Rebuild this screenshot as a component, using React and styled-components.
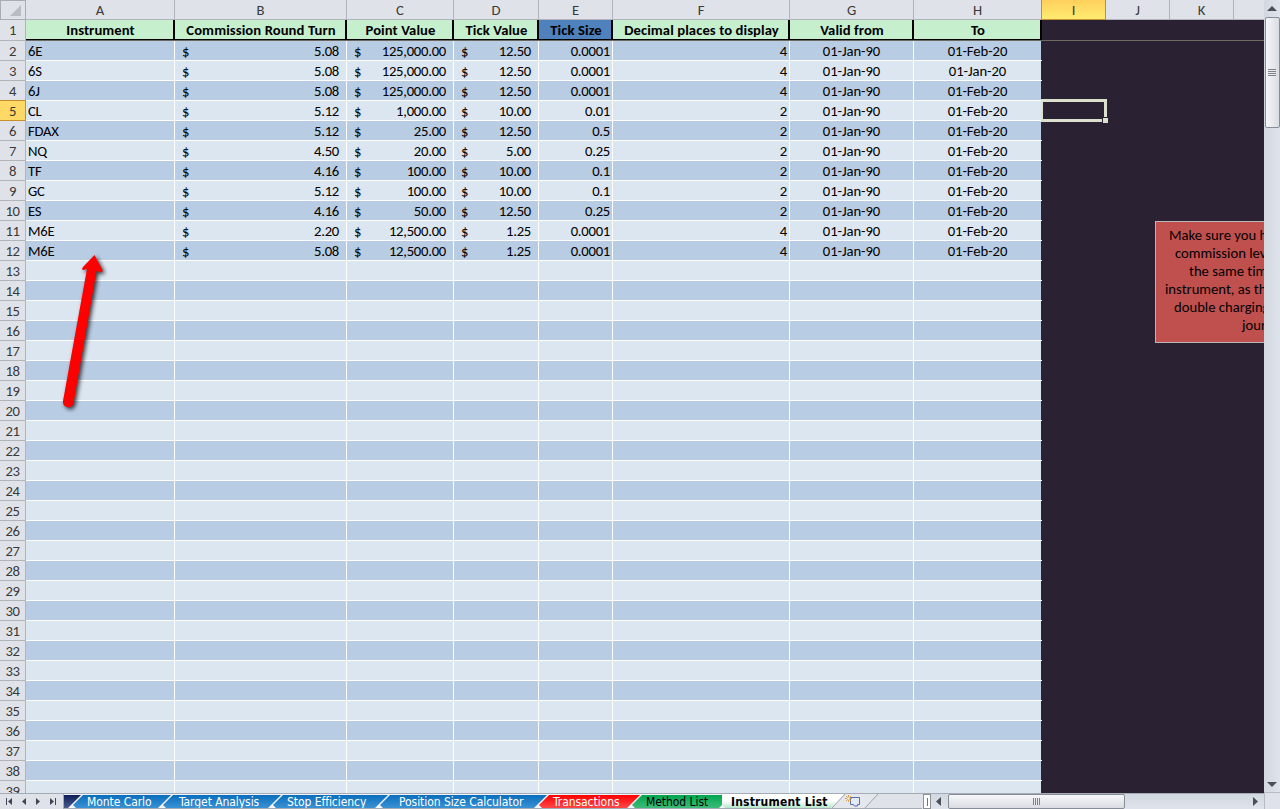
import React from "react";
import styled, { createGlobalStyle, css } from "styled-components";

const GlobalStyle = createGlobalStyle`
  *,
  *::after {
    box-sizing: border-box;
  }

  body {
    margin: 0;
    overflow: hidden;
  }
`;

const ORANGE_LINE = "#c58f2d";

const Window = styled.div`
  display: grid;
  grid-template-columns: 1264px 16px;
  grid-template-rows: 793px 16px;
  width: 1280px;
  height: 809px;
  overflow: hidden;
  background: #dfe2e8;
  color: #000;
  font-family: Carlito, Lato, sans-serif;
  font-size: 14.67px;
  font-variant-ligatures: none;
`;

const Sheet = styled.div`
  position: relative;
  width: 1264px;
  height: 793px;
  overflow: hidden;
  background: #2a2133;
`;

const HeadingRow = styled.div`
  display: flex;
  height: 20px;
  width: 1300px;
`;

const Corner = styled.div`
  display: flex;
  align-items: flex-end;
  justify-content: flex-end;
  flex: none;
  width: 26px;
  padding: 0 4px 3px 0;
  border: 1px solid #a9adb3;
  background: #dfe2e8;
`;

const ColumnHeading = styled.div`
  flex: none;
  width: ${({ $width }) => $width}px;
  border-right: 1px solid #b1b5ba;
  border-bottom: 1px solid #b1b5ba;
  background: #dfe2e8;
  color: #3a3a3a;
  line-height: 20px;
  text-align: center;

  ${({ $active }) =>
    $active &&
    css`
      width: 65px;
      margin-left: -1px;
      border: 1px solid ${ORANGE_LINE};
      border-top: 0;
      background: linear-gradient(#ffcf5c, #ffec72);
    `}
`;

const RowHeading = styled.div`
  flex: none;
  width: 26px;
  height: ${({ $tall }) => ($tall ? 21 : 20)}px;
  border-right: 1px solid #b1b5ba;
  border-bottom: 1px solid #b1b5ba;
  background: #dfe2e8;
  color: #3a3a3a;
  letter-spacing: -0.5px;
  line-height: 21px;
  text-align: center;

  ${({ $active }) =>
    $active &&
    css`
      height: 21px;
      margin-top: -1px;
      border: 1px solid ${ORANGE_LINE};
      border-left: 0;
      background: #ffd966;
    `}
`;

const TitleRow = styled.div`
  display: flex;
  height: 21px;
`;

const Titles = styled.div`
  display: flex;
  width: 1238px;
  border-bottom: 1px solid #6b6a63;
`;

const Title = styled.div`
  flex: none;
  width: ${({ $width }) => $width}px;
  padding-left: 2px;
  border-right: 2px solid #000;
  border-bottom: 1px solid #000;
  background: ${({ $dark }) => ($dark ? "#4f81bd" : "#c6efce")};
  font-weight: bold;
  letter-spacing: 0.08px;
  line-height: 21px;
  text-align: center;
  white-space: nowrap;
`;

const Row = styled.div`
  display: flex;
  height: 20px;
`;

const Cells = styled.div`
  display: flex;
  width: 1016px;
  border-bottom: 1px solid #fff;
  background: ${({ $dark }) => ($dark ? "#b8cce4" : "#dce6f1")};
`;

const Cell = styled.div`
  display: flex;
  flex: none;
  justify-content: ${({ $align }) => $align};
  width: ${({ $width }) => $width}px;
  padding: ${({ $padding }) => $padding};
  border-right: 1px solid #fff;
  letter-spacing: ${({ $align }) => ($align === "center" ? -0.08 : -0.25)}px;
  line-height: 21px;
  white-space: nowrap;

  &:last-child {
    border-right-color: #2a2133;
  }
`;

const Selection = styled.div`
  position: absolute;
  left: 1041px;
  top: 99px;
  width: 66px;
  height: 23px;
  border: 3px solid #dbe1cd;
  border-left-width: 2px;

  &::after {
    content: "";
    position: absolute;
    right: -5px;
    bottom: -5px;
    width: 7px;
    height: 7px;
    border: 1px solid #2a2133;
    background: #dbe1cd;
  }
`;

const Note = styled.div`
  position: absolute;
  left: 1155px;
  top: 221px;
  width: 206px;
  height: 122px;
  padding: 4px 0;
  border: 1px solid #b9b5b8;
  background: #c0504d;
  line-height: 18px;
  white-space: nowrap;
`;

const NoteLine = styled.div`
  padding-left: ${({ $indent }) => $indent}px;
`;

const ArrowShape = styled.svg`
  position: absolute;
  left: 50px;
  top: 245px;
  filter: drop-shadow(2px 2px 2px rgba(0, 0, 0, 0.75));
`;

const VerticalBar = styled.div`
  display: flex;
  flex-direction: column;
  align-items: center;
  height: 793px;
  border-bottom: 1px solid #b5bac3;
  background: linear-gradient(90deg, #d2d8e0, #dfe3ec);

  svg {
    flex: none;
  }
`;

const VerticalThumb = styled.div`
  display: flex;
  flex-direction: column;
  align-items: center;
  justify-content: center;
  gap: 1px;
  width: 15px;
  height: 111px;
  margin-bottom: auto;
  border: 1px solid #868d99;
  border-radius: 2px;
  background: linear-gradient(90deg, #f6f7f9, #d9dce2);
`;

const Grip = styled.i`
  width: ${({ $upright }) => ($upright ? 1 : 8)}px;
  height: ${({ $upright }) => ($upright ? 7 : 1)}px;
  background: #7d828b;
`;

const Footer = styled.div`
  display: flex;
  width: 1264px;
  height: 16px;
  border-top: 1px solid #a5abb5;
  background: #dfe2e8;
`;

const TabNav = styled.div`
  display: flex;
  align-items: center;
  flex: none;
  width: 64px;
  border-right: 1px solid #a5abb5;
`;

const Tabs = styled.div`
  display: flex;
  flex: none;
  width: 858px;
  height: 15px;
  overflow: hidden;
  border-bottom: 1px solid #a5abb5;
  background: linear-gradient(90deg, #f2f4f7 780px, #dfe2e8 780px);
  font-family: "DejaVu Sans Condensed", "DejaVu Sans", sans-serif;
  font-size: 12px;
  letter-spacing: -0.06px;
`;

const Tab = styled.div`
  flex: none;
  width: ${({ $width }) => $width}px;
  height: 13px;
  margin: 1px -11px 0 0;
  padding-left: ${({ $indent }) => $indent}px;
  clip-path: polygon(13px 0, 100% 0, calc(100% - 13px) 100%, 6px 100%, 3px 10px);
  background: ${({ $fill }) => $fill};
  color: ${({ $color }) => $color || "#fff"};
  line-height: 14px;
  white-space: nowrap;

  ${({ $first }) =>
    $first &&
    css`
      clip-path: polygon(0 0, 100% 0, calc(100% - 13px) 100%, 0 100%);
    `}

  ${({ $last }) =>
    $last &&
    css`
      margin-right: 0;
      clip-path: polygon(13px 0, 100% 0, 100% 10px, calc(100% - 3px) 100%, 6px 100%, 3px 10px);
    `}

  ${({ $active }) =>
    $active &&
    css`
      height: 14px;
      margin: 0 -12px 0 0;
      clip-path: polygon(0 0, 100% 0, calc(100% - 13px) 100%, 3px 100%, 0 10px);
      font-weight: bold;
      letter-spacing: 0.2px;
      line-height: 16px;
    `}
`;

const NewTab = styled.svg`
  flex: none;
`;

const Splitter = styled.div`
  display: flex;
  align-items: center;
  justify-content: center;
  flex: none;
  width: 8px;
  margin-left: 1px;
  border: 1px solid #8d9096;
  background: #fff;

  &::after {
    content: "";
    width: 1px;
    height: 8px;
    background: #6f737a;
  }
`;

const HorizontalBar = styled.div`
  display: flex;
  align-items: center;
  flex: 1;
  padding-left: 1px;
  background: linear-gradient(#d2d8e0, #dfe3ec);
`;

const HorizontalThumb = styled.div`
  display: flex;
  align-items: center;
  justify-content: center;
  gap: 1px;
  width: 177px;
  height: 15px;
  margin: 0 auto 0 0;
  border: 1px solid #868d99;
  border-radius: 2px;
  background: linear-gradient(#f6f7f9, #d9dce2);
`;

const BarEnd = styled.div`
  border-left: 1px solid #b5bac3;
  background: #dfe2e8;
`;

const columns = [
  { letter: "A", title: "Instrument", width: 149, align: "flex-start", padding: "0 2px" },
  { letter: "B", title: "Commission Round Turn", width: 172, align: "space-between", padding: "0 7px" },
  { letter: "C", title: "Point Value", width: 107, align: "space-between", padding: "0 7px" },
  { letter: "D", title: "Tick Value", width: 85, align: "space-between", padding: "0 7px" },
  { letter: "E", title: "Tick Size", width: 74, align: "flex-end", padding: "0 2px" },
  { letter: "F", title: "Decimal places to display", width: 177, align: "flex-end", padding: "0 2px" },
  { letter: "G", title: "Valid from", width: 124, align: "center", padding: "0" },
  { letter: "H", title: "To", width: 128, align: "center", padding: "0" },
];

const instruments = [
  ["6E", "5.08", "125,000.00", "12.50", "0.0001", "4", "01-Jan-90", "01-Feb-20"],
  ["6S", "5.08", "125,000.00", "12.50", "0.0001", "4", "01-Jan-90", "01-Jan-20"],
  ["6J", "5.08", "125,000.00", "12.50", "0.0001", "4", "01-Jan-90", "01-Feb-20"],
  ["CL", "5.12", "1,000.00", "10.00", "0.01", "2", "01-Jan-90", "01-Feb-20"],
  ["FDAX", "5.12", "25.00", "12.50", "0.5", "2", "01-Jan-90", "01-Feb-20"],
  ["NQ", "4.50", "20.00", "5.00", "0.25", "2", "01-Jan-90", "01-Feb-20"],
  ["TF", "4.16", "100.00", "10.00", "0.1", "2", "01-Jan-90", "01-Feb-20"],
  ["GC", "5.12", "100.00", "10.00", "0.1", "2", "01-Jan-90", "01-Feb-20"],
  ["ES", "4.16", "50.00", "12.50", "0.25", "2", "01-Jan-90", "01-Feb-20"],
  ["M6E", "2.20", "12,500.00", "1.25", "0.0001", "4", "01-Jan-90", "01-Feb-20"],
  ["M6E", "5.08", "12,500.00", "1.25", "0.0001", "4", "01-Jan-90", "01-Feb-20"],
];

const rowNumbers = Array.from({ length: 38 }, (_, index) => index + 2);

const blue = "linear-gradient(#0a6ebd, #3a92d4)";

const tabs = [
  { name: "Monte Carlo", width: 101, indent: 17, fill: blue },
  { name: "Target Analysis", width: 121, indent: 19, fill: blue },
  { name: "Stop Efficiency", width: 118, indent: 17, fill: blue },
  { name: "Position Size Calculator", width: 170, indent: 22, fill: blue },
  { name: "Transactions", width: 104, indent: 17, fill: "linear-gradient(#ff0000, #ff4848)" },
  { name: "Method List", width: 93, indent: 17, fill: "linear-gradient(#00a650, #3dbb78)", color: "#000", last: true },
  { name: "Instrument List", width: 122, indent: 9, fill: "linear-gradient(#fff 50%, #b5e6c8)", color: "#000", active: true },
];

const note = [
  ["Make sure you have only one", 13],
  ["commission level active at", 19],
  ["the same time for each", 33],
  ["instrument, as this will cause", 9],
  ["double charging in your", 18],
  ["journal", 86],
];

const Triangle = ({ points, width = 16, height = 16 }) => (
  <svg width={width} height={height}>
    <polygon points={points} fill="#4b4f57" />
  </svg>
);

const SheetRow = ({ number }) => {
  const values = instruments[number - 2];

  return (
    <Row>
      <RowHeading $active={number === 5}>{number}</RowHeading>
      <Cells $dark={number % 2 === 0}>
        {columns.map(({ letter, width, align, padding }, index) => (
          <Cell key={letter} $width={width} $align={align} $padding={padding}>
            {values && align === "space-between" && <span>$</span>}
            {values && <span>{values[index]}</span>}
          </Cell>
        ))}
      </Cells>
    </Row>
  );
};

const App = () => (
  <Window>
    <GlobalStyle />
    <Sheet>
      <HeadingRow>
        <Corner>
          <svg width="11" height="11">
            <polygon points="11,0 11,11 0,11" fill="#b9bdc3" />
          </svg>
        </Corner>
        {columns.map(({ letter, width }) => (
          <ColumnHeading key={letter} $width={width}>
            {letter}
          </ColumnHeading>
        ))}
        <ColumnHeading $active>I</ColumnHeading>
        <ColumnHeading $width={64}>J</ColumnHeading>
        <ColumnHeading $width={64}>K</ColumnHeading>
        <ColumnHeading $width={64} />
      </HeadingRow>
      <TitleRow>
        <RowHeading $tall>1</RowHeading>
        <Titles>
          {columns.map(({ letter, title, width }) => (
            <Title key={letter} $width={width} $dark={letter === "E"}>
              {title}
            </Title>
          ))}
        </Titles>
      </TitleRow>
      {rowNumbers.map((number) => (
        <SheetRow key={number} number={number} />
      ))}
      <Selection />
      <Note>
        {note.map(([text, indent]) => (
          <NoteLine key={text} $indent={indent}>
            {text}
          </NoteLine>
        ))}
      </Note>
      <ArrowShape width="65" height="175">
        <path
          d="M44.5 10 L52.5 25 Q53 28 50 27 L46.5 26 L23.5 158 A5.2 5.2 0 0 1 13 156 L37 24 L33.5 25 Q31 25 33 22 Z"
          fill="#fe0000"
        />
      </ArrowShape>
    </Sheet>
    <VerticalBar>
      <Triangle height={17} points="8,6 13,11 3,11" />
      <VerticalThumb>
        <Grip />
        <Grip />
        <Grip />
        <Grip />
      </VerticalThumb>
      <Triangle points="3,6 13,6 8,11" />
    </VerticalBar>
    <Footer>
      <TabNav>
        <svg width="63" height="15" fill="#3f4654">
          <path d="M6 4h1v7h-1z M12 4v7l-4-3.5z M26 4v7l-4-3.5z M36 4v7l4-3.5z M50 4v7l4-3.5z M55 4h1v7h-1z" />
        </svg>
      </TabNav>
      <Tabs>
        <Tab $first $width={17} $indent={0} $fill="linear-gradient(#0b1f5c, #4a5a8c)" />
        {tabs.map(({ name, width, indent, fill, color, last, active }) => (
          <Tab
            key={name}
            $width={width}
            $indent={indent}
            $fill={fill}
            $color={color}
            $last={last}
            $active={active}
          >
            {name}
          </Tab>
        ))}
        <NewTab width="47" height="14" fill="none">
          <path d="M13 0h33L33 14H0z" fill="#e4e7ec" />
          <path d="M0 14L13 0M33 14L46 0" stroke="#9da2aa" />
          <path d="M18.5 3.5h9v7h-2v1.500h-3l-1-1.500h-3z" fill="#e3ebf7" stroke="#5a6f9f" />
          <path d="M16.500 1v7M13 4.500h7M14 2l5 5M19 2l-5 5" stroke="#d98a2b" strokeWidth="0.8" />
          <circle cx="16.500" cy="4.500" r="1.300" fill="#fff3c4" />
        </NewTab>
      </Tabs>
      <Splitter />
      <HorizontalBar>
        <Triangle height={15} points="9,3 9,12 4,7.5" />
        <HorizontalThumb>
          <Grip $upright />
          <Grip $upright />
          <Grip $upright />
          <Grip $upright />
        </HorizontalThumb>
        <Triangle height={15} points="5,3 5,12 10,7.5" />
      </HorizontalBar>
    </Footer>
    <BarEnd />
  </Window>
);

export default App;
